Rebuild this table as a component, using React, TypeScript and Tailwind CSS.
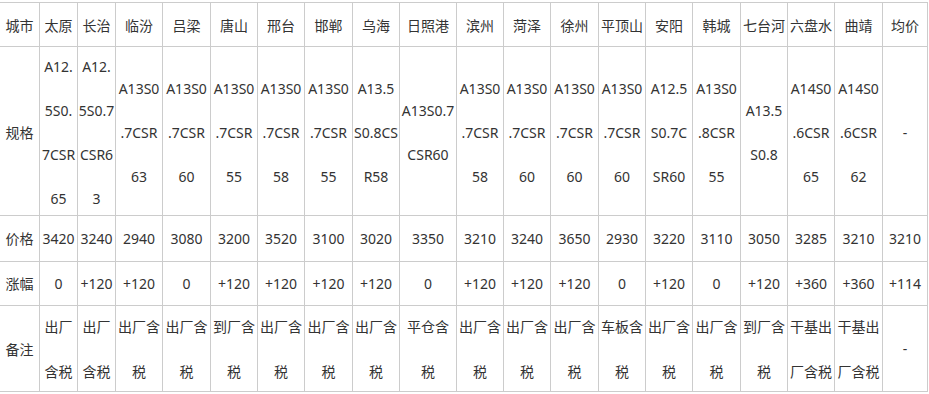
import React from "react";

const cities = ["太原","长治","临汾","吕梁","唐山","邢台","邯郸","乌海","日照港","滨州","菏泽","徐州","平顶山","安阳","韩城","七台河","六盘水","曲靖","均价"];

const specs: string[][] = [
  ["A12.","5S0.","7CSR","65"],
  ["A12.","5S0.7","CSR6","3"],
  ["A13S0",".7CSR","63"],
  ["A13S0",".7CSR","60"],
  ["A13S0",".7CSR","55"],
  ["A13S0",".7CSR","58"],
  ["A13S0",".7CSR","55"],
  ["A13.5","S0.8CS","R58"],
  ["A13S0.7","CSR60"],
  ["A13S0",".7CSR","58"],
  ["A13S0",".7CSR","60"],
  ["A13S0",".7CSR","60"],
  ["A13S0",".7CSR","60"],
  ["A12.5","S0.7C","SR60"],
  ["A13S0",".8CSR","55"],
  ["A13.5","S0.8"],
  ["A14S0",".6CSR","65"],
  ["A14S0",".6CSR","62"],
  ["-"],
];

const prices = ["3420","3240","2940","3080","3200","3520","3100","3020","3350","3210","3240","3650","2930","3220","3110","3050","3285","3210","3210"];
const changes = ["0","+120","+120","0","+120","+120","+120","+120","0","+120","+120","+120","0","+120","0","+120","+360","+360","+114"];

const notes: string[][] = [
  ["出厂","含税"],["出厂","含税"],["出厂含","税"],["出厂含","税"],["到厂含","税"],["出厂含","税"],["出厂含","税"],["出厂含","税"],["平仓含","税"],["出厂含","税"],["出厂含","税"],["出厂含","税"],["车板含","税"],["出厂含","税"],["出厂含","税"],["到厂含","税"],["干基出","厂含税"],["干基出","厂含税"],["-"],
];

const cell = "flex flex-col items-center justify-center border-r border-b border-[#cccccc] text-center whitespace-nowrap overflow-hidden";

function Cell({ lines, leading }: { lines: string[]; leading: string }) {
  return (
    <div className={cell}>
      {lines.map((l, i) => (
        <div key={i} className={leading}>{l}</div>
      ))}
    </div>
  );
}

export default function App() {
  return (
    <div className="bg-white w-[929px] h-[394px] pt-[2px]" style={{ fontFamily: '"Noto Sans", "Noto Sans CJK SC", sans-serif' }}>
      <div className="grid grid-cols-[40px_38px_38px_47px_48px_47px_47px_48px_47px_57px_47px_47px_48px_47px_47px_48px_47px_47px_48px_45px] grid-rows-[44px_169px_46px_44px_86px] w-[928px] border-t border-[#cccccc] text-[14px] text-[#333333]">
        <Cell lines={["城市"]} leading="leading-[20px] pt-[3px]" />
        {cities.map((c) => (
          <Cell key={c} lines={[c]} leading="leading-[20px] pt-[3px]" />
        ))}
        <Cell lines={["规格"]} leading="leading-[41px] pt-[3px]" />
        {specs.map((s, i) => (
          <Cell key={i} lines={s} leading="leading-[41px] pt-[3px]" />
        ))}
        <Cell lines={["价格"]} leading="leading-[20px]" />
        {prices.map((p, i) => (
          <Cell key={i} lines={[p]} leading="leading-[20px]" />
        ))}
        <Cell lines={["涨幅"]} leading="leading-[20px] pt-[1px]" />
        {changes.map((p, i) => (
          <Cell key={i} lines={[p]} leading="leading-[20px] pt-[1px]" />
        ))}
        <Cell lines={["备注"]} leading="leading-[44px] pt-[2px]" />
        {notes.map((n, i) => (
          <Cell key={i} lines={n} leading="leading-[44px] pt-[1px]" />
        ))}
      </div>
    </div>
  );
}
